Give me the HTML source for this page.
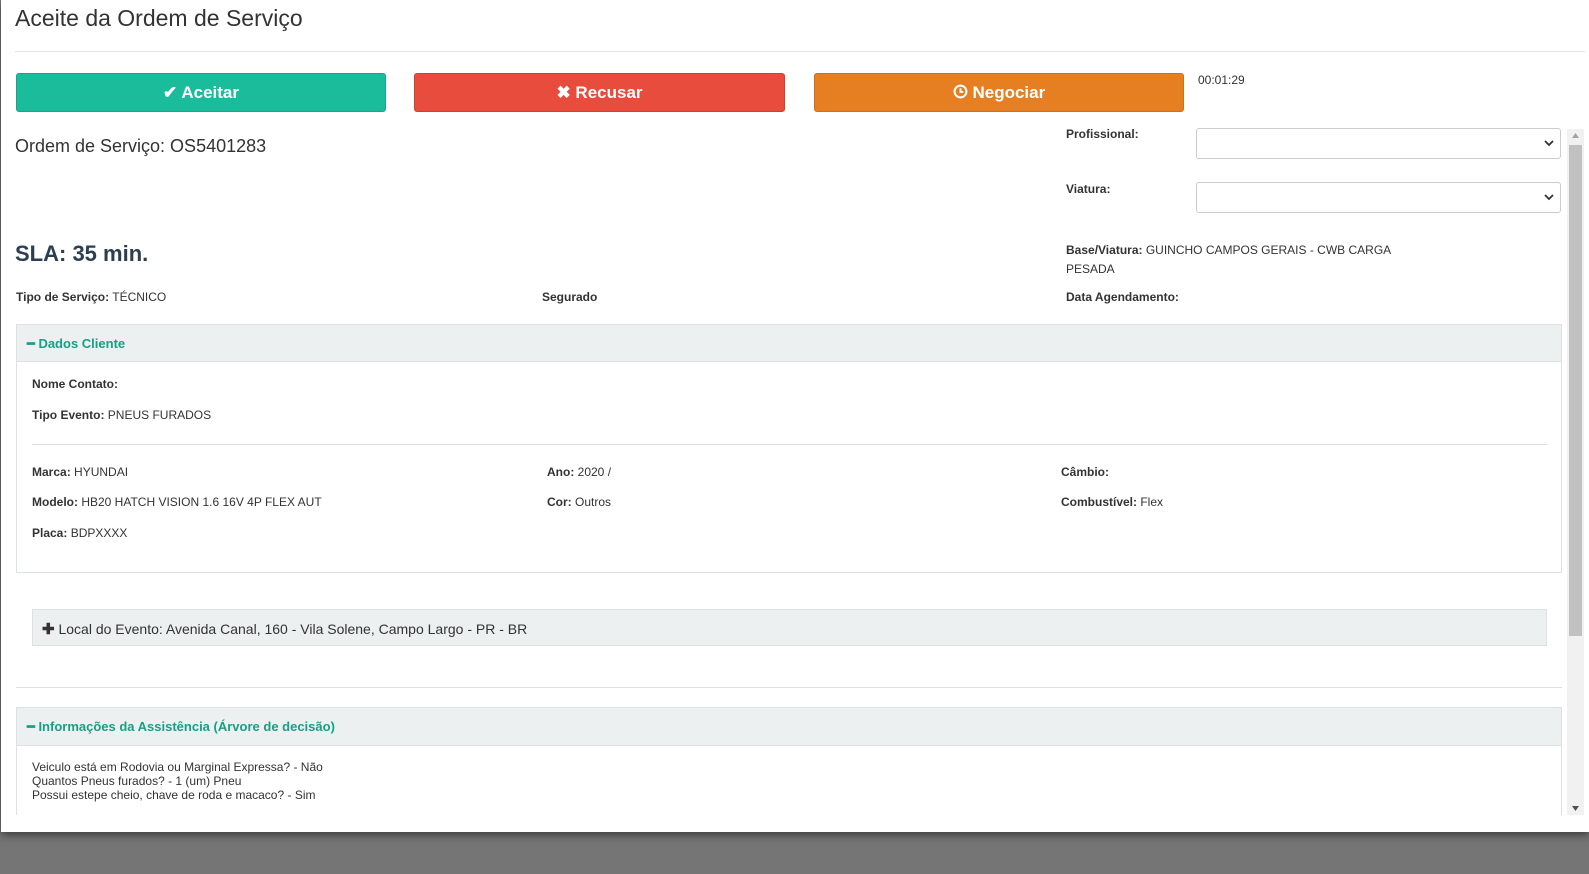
<!DOCTYPE html>
<html><head><meta charset="utf-8"><style>
*{box-sizing:border-box;margin:0;padding:0}
body{width:1589px;height:874px;background:#757575;font-family:"Liberation Sans",Arial,sans-serif;color:#333;font-size:12px;position:relative;overflow:hidden}
.modal{position:absolute;left:1px;top:0;width:1588px;height:832px;background:#fff;box-shadow:0 3px 8px rgba(0,0,0,.5);overflow:hidden}
.a{position:absolute;white-space:nowrap}
b{font-weight:bold}
.btn{position:absolute;top:73px;height:39px;border-radius:3px;color:#fff;font-weight:bold;font-size:17px;text-align:center;line-height:38px}
.sel{position:absolute;left:1195px;width:365px;height:31px;border:1px solid #ccc;border-radius:3px}
.sel svg{position:absolute;right:6px;top:10px}
.ph{position:absolute;background:#ecf0f1;border:1px solid #dde1e2}
.gt{color:#16a085;font-weight:bold;font-size:13px}
</style></head><body>
<div class="modal">
<div class="a" style="left:14px;top:5px;font-size:23px;color:#333">Aceite da Ordem de Serviço</div>
<div class="a" style="left:14px;top:51px;width:1570px;height:1px;background:#e2e2e2"></div>
<div class="btn" style="left:15px;width:370px;background:#1abc9c;border:1px solid #17a689">✔ Aceitar</div>
<div class="btn" style="left:413px;width:371px;background:#e74c3c;border:1px solid #d0402f">✖ Recusar</div>
<div class="btn" style="left:813px;width:370px;background:#e67e22;border:1px solid #cf6f1a"><svg width="15" height="15" viewBox="0 0 16 16" style="vertical-align:-1px"><circle cx="8" cy="8" r="6.3" fill="none" stroke="#fff" stroke-width="2.2"/><path d="M8 4.5V8.5H11" fill="none" stroke="#fff" stroke-width="2"/></svg> Negociar</div>
<div class="a" style="left:1197px;top:73px;font-size:12px">00:01:29</div>
<div class="a" style="left:14px;top:136px;font-size:18px">Ordem de Serviço: OS5401283</div>
<div class="a" style="left:1065px;top:127px"><b>Profissional:</b></div>
<div class="sel" style="top:128px"><svg width="10" height="8" viewBox="0 0 10 8"><path d="M1 2l4 4 4-4" fill="none" stroke="#333" stroke-width="1.8"/></svg></div>
<div class="a" style="left:1065px;top:182px"><b>Viatura:</b></div>
<div class="sel" style="top:182px"><svg width="10" height="8" viewBox="0 0 10 8"><path d="M1 2l4 4 4-4" fill="none" stroke="#333" stroke-width="1.8"/></svg></div>
<div class="a" style="left:1566px;top:129px;width:17px;height:686px;background:#f1f1f1"><div style="position:absolute;left:2px;top:16px;width:13px;height:491px;background:#c1c1c1"></div>
<svg style="position:absolute;left:5px;top:4px" width="7" height="5"><path d="M0 5L3.5 0 7 5z" fill="#a3a3a3"/></svg>
<svg style="position:absolute;left:5px;top:677px" width="7" height="5"><path d="M0 0L3.5 5 7 0z" fill="#505050"/></svg></div>
<div class="a" style="left:14px;top:241px;font-size:22px;font-weight:bold;color:#2c3e50">SLA: 35 min.</div>
<div class="a" style="left:1065px;top:241px;line-height:19px"><b>Base/Viatura:</b> GUINCHO CAMPOS GERAIS - CWB CARGA<br>PESADA</div>
<div class="a" style="left:15px;top:290px"><b>Tipo de Serviço:</b> TÉCNICO</div>
<div class="a" style="left:541px;top:290px"><b>Segurado</b></div>
<div class="a" style="left:1065px;top:290px"><b>Data Agendamento:</b></div>
<div class="a" style="left:15px;top:324px;width:1546px;height:249px;border:1px solid #dde1e2"></div>
<div class="ph" style="left:15px;top:324px;width:1546px;height:38px"><div class="a gt" style="left:10px;top:11px">━ Dados Cliente</div></div>
<div class="a" style="left:31px;top:377px"><b>Nome Contato:</b></div>
<div class="a" style="left:31px;top:408px"><b>Tipo Evento:</b> PNEUS FURADOS</div>
<div class="a" style="left:31px;top:444px;width:1515px;height:1px;background:#ddd"></div>
<div class="a" style="left:31px;top:465px"><b>Marca:</b> HYUNDAI</div>
<div class="a" style="left:31px;top:495px"><b>Modelo:</b> HB20 HATCH VISION 1.6 16V 4P FLEX AUT</div>
<div class="a" style="left:31px;top:526px"><b>Placa:</b> BDPXXXX</div>
<div class="a" style="left:546px;top:465px"><b>Ano:</b> 2020 /</div>
<div class="a" style="left:546px;top:495px"><b>Cor:</b> Outros</div>
<div class="a" style="left:1060px;top:465px"><b>Câmbio:</b></div>
<div class="a" style="left:1060px;top:495px"><b>Combustível:</b> Flex</div>
<div class="ph" style="left:31px;top:609px;width:1515px;height:37px"><div class="a" style="left:9px;top:10px;font-size:14px"><b style="font-size:15px">✚</b> Local do Evento: Avenida Canal, 160 - Vila Solene, Campo Largo - PR - BR</div></div>
<div class="a" style="left:15px;top:687px;width:1546px;height:1px;background:#e0e0e0"></div>
<div class="a" style="left:15px;top:707px;width:1546px;height:108px;border:1px solid #dde1e2;border-bottom:none"></div>
<div class="ph" style="left:15px;top:707px;width:1546px;height:39px"><div class="a gt" style="left:10px;top:11px">━ Informações da Assistência (Árvore de decisão)</div></div>
<div class="a" style="left:31px;top:760px;line-height:14px">Veiculo está em Rodovia ou Marginal Expressa? - Não<br>Quantos Pneus furados? - 1 (um) Pneu<br>Possui estepe cheio, chave de roda e macaco? - Sim</div>
</div>
</body></html>
